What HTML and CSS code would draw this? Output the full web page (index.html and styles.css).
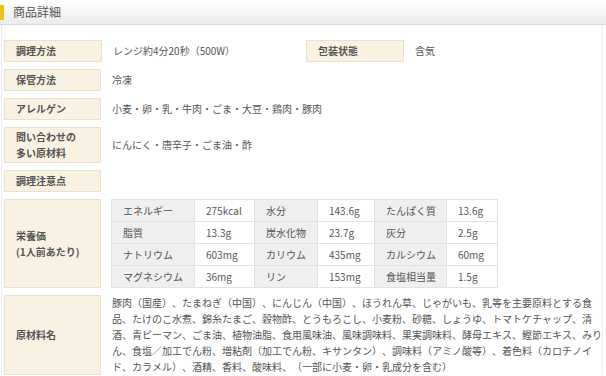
FILE: index.html
```html
<!DOCTYPE html>
<html lang="ja">
<head>
<meta charset="utf-8">
<title>商品詳細</title>
<link rel="stylesheet" href="styles.css">
</head>
<body>
<div class="page">
  <div class="head">
    <span class="head-mark"></span>
    <h2 class="head-title">商品詳細</h2>
  </div>
  <div class="body">
    <div class="row row-split">
      <div class="cell">
        <div class="label">調理方法</div>
        <div class="value">レンジ約4分20秒（500W）</div>
      </div>
      <div class="cell">
        <div class="label">包装状態</div>
        <div class="value">含気</div>
      </div>
    </div>
    <div class="row">
      <div class="label">保管方法</div>
      <div class="value">冷凍</div>
    </div>
    <div class="row">
      <div class="label">アレルゲン</div>
      <div class="value">小麦・卵・乳・牛肉・ごま・大豆・鶏肉・豚肉</div>
    </div>
    <div class="row">
      <div class="label label-multi">問い合わせの<br>多い原材料</div>
      <div class="value">にんにく・唐辛子・ごま油・酢</div>
    </div>
    <div class="row">
      <div class="label">調理注意点</div>
      <div class="value"></div>
    </div>
    <div class="row">
      <div class="label label-multi label-nutri">栄養価<br>(1人前あたり)</div>
      <div class="value value-table">
        <table class="nutri">
          <colgroup>
            <col class="c1"><col class="c2"><col class="c3"><col class="c4"><col class="c5"><col class="c6">
          </colgroup>
          <tr><th>エネルギー</th><td>275kcal</td><th>水分</th><td>143.6g</td><th>たんぱく質</th><td>13.6g</td></tr>
          <tr><th>脂質</th><td>13.3g</td><th>炭水化物</th><td>23.7g</td><th>灰分</th><td>2.5g</td></tr>
          <tr><th>ナトリウム</th><td>603mg</td><th>カリウム</th><td>435mg</td><th>カルシウム</th><td>60mg</td></tr>
          <tr><th>マグネシウム</th><td>36mg</td><th>リン</th><td>153mg</td><th>食塩相当量</th><td>1.5g</td></tr>
        </table>
      </div>
    </div>
    <div class="row">
      <div class="label">原材料名</div>
      <div class="value value-long">豚肉（国産）、たまねぎ（中国）、にんじん（中国）、ほうれん草、じゃがいも、乳等を主要原料とする食<br>品、たけのこ水煮、錦糸たまご、穀物酢、とうもろこし、小麦粉、砂糖、しょうゆ、トマトケチャップ、清<br>酒、青ピーマン、ごま油、植物油脂、食用風味油、風味調味料、果実調味料、酵母エキス、鰹節エキス、みり<br>ん、食塩／加工でん粉、増粘剤（加工でん粉、キサンタン）、調味料（アミノ酸等）、着色料（カロチノイ<br>ド、カラメル）、酒精、香料、酸味料、（一部に小麦・卵・乳成分を含む）</div>
    </div>
  </div>
</div>
</body>
</html>
```

FILE: styles.css
```css
* { box-sizing: border-box; }
html, body { margin: 0; padding: 0; background: #fff; }
body {
  font-family: "Noto Sans CJK JP", "Noto Sans", sans-serif;
  font-size: 10px;
  color: #555;
  text-spacing-trim: space-all;
  font-kerning: none;
}
.page { width: 606px; }

.head {
  height: 25px;
  display: flex;
  align-items: center;
  background: linear-gradient(#ffffff, #ebebeb);
  border-bottom: 1px solid #d9d9d9;
}
.head-mark {
  width: 4px;
  height: 15px;
  background: #efc21a;
  margin-right: 9px;
}
.head-title {
  margin: 0;
  font-size: 12px;
  font-weight: normal;
  color: #555;
  line-height: 16px;
}

.body {
  margin-left: 1px;
  width: 602px;
  border-left: 1px solid #eeeeee;
  border-right: 1px solid #eeeeee;
  padding: 15px 0 0 2px;
}

.row {
  display: flex;
  margin-bottom: 7px;
  line-height: 16px;
}
.row-split { display: grid; grid-template-columns: 302px 1fr; }
.cell { display: flex; }

.label {
  flex: none;
  width: 97px;
  min-height: 22px;
  padding: 1px 4px 1px 11px;
  display: flex;
  align-items: center;
  background: #f9f2e2;
  border: 1px solid #ebe0c9;
  font-weight: bold;
  color: #555;
}
.cell .label { width: 98px; }

.value {
  flex: 1;
  padding-left: 11px;
  display: flex;
  align-items: center;
  color: #555;
}
.value-table { padding-left: 10px; }
.value-long { display: block; white-space: nowrap; }

.nutri {
  border-collapse: collapse;
  table-layout: fixed;
  width: 386px;
}
.nutri .c1 { width: 83px; }
.nutri .c2 { width: 60px; }
.nutri .c3 { width: 63px; }
.nutri .c4 { width: 57px; }
.nutri .c5 { width: 72px; }
.nutri .c6 { width: 51px; }
.nutri th, .nutri td {
  height: 22px;
  padding: 0 0 0 11px;
  border: 1px solid #e2e2e2;
  text-align: left;
  font-weight: normal;
  color: #555;
  white-space: nowrap;
}
.nutri th { background: #efefef; }
.nutri td { background: #fff; }
```
